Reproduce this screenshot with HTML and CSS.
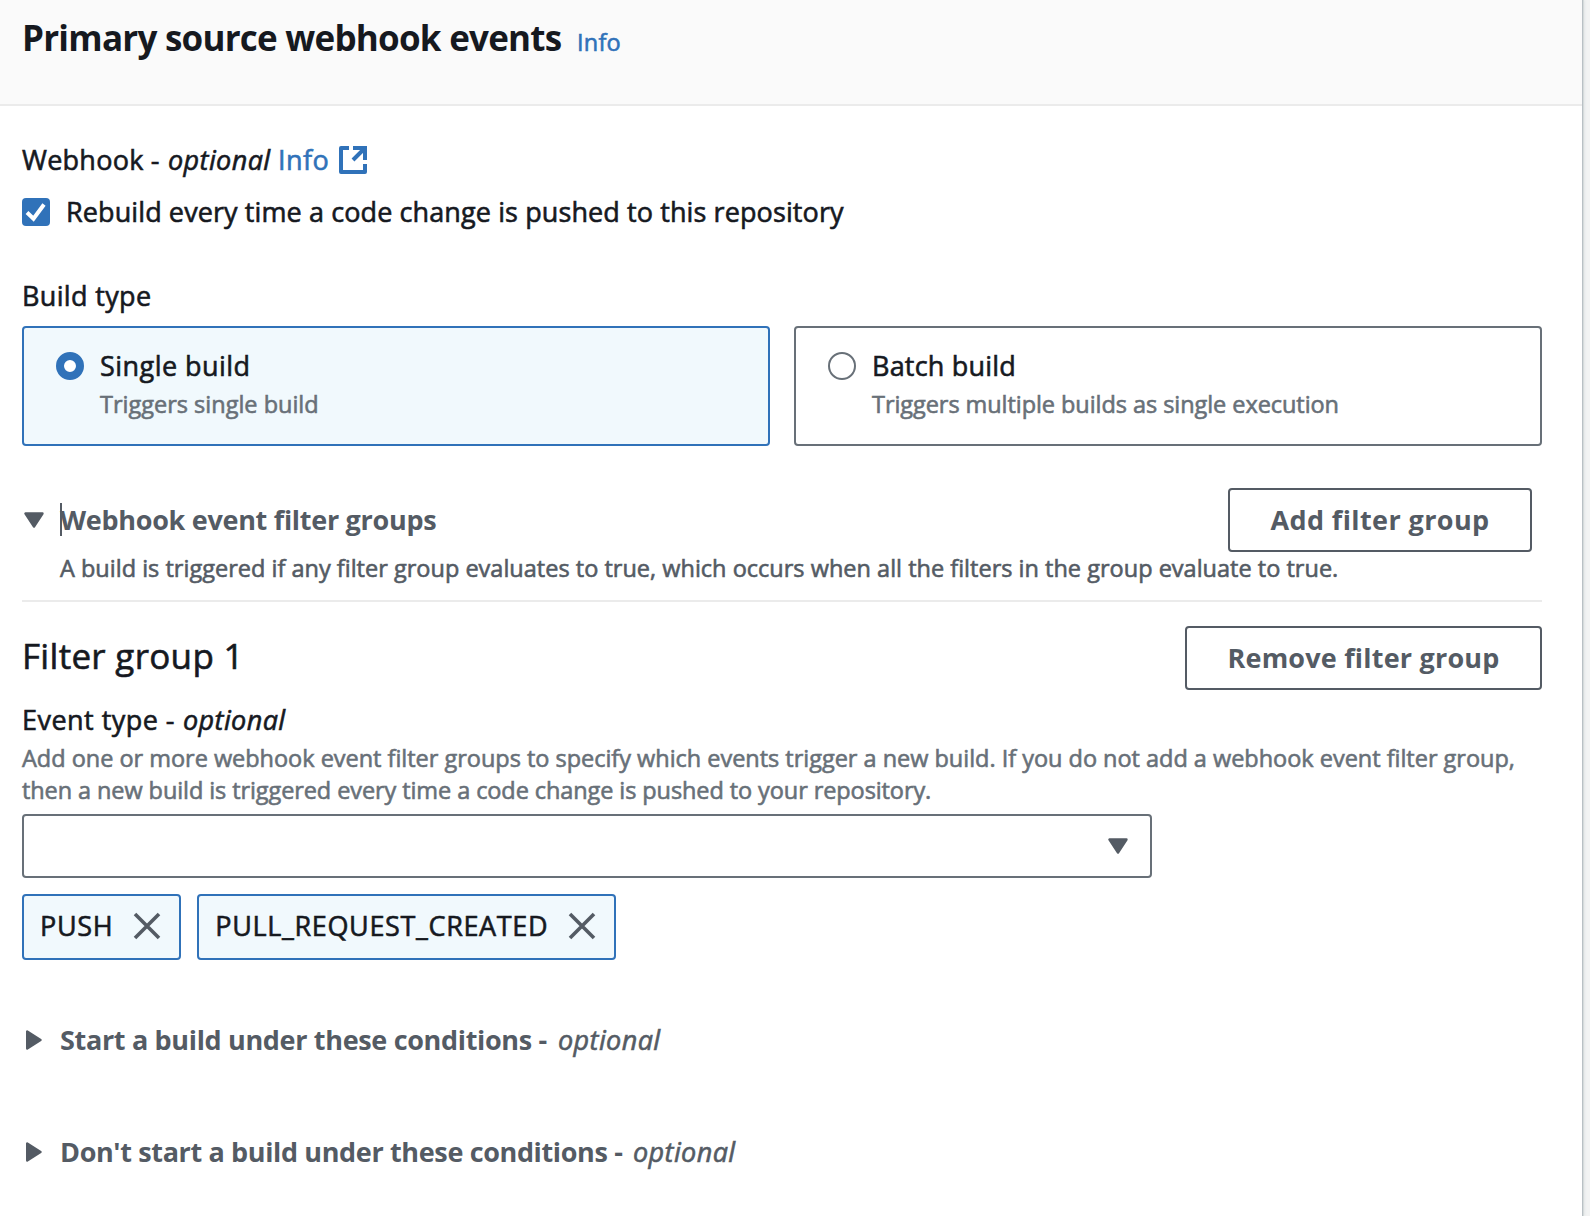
FILE: index.html
```html
<!DOCTYPE html>
<html lang="en">
<head>
<meta charset="utf-8">
<title>Primary source webhook events</title>
<link rel="stylesheet" href="styles.css">
</head>
<body>
<main class="panel">
  <header class="panel-header">
    <h1 class="title">Primary source webhook events</h1>
    <a class="link info-small">Info</a>
  </header>
  <div class="content">
    <div class="label webhook-label"><span class="lead">Webhook -&nbsp;</span><em>optional</em><a class="link info">Info</a>
      <svg class="external" width="28" height="28" viewBox="0 0 28 28" fill="none" stroke="currentColor" stroke-width="4"><path d="M10 2H2v24h24v-8" stroke-linejoin="round"/><path d="M14 2h12v12M25.500 2.500 14 14"/></svg>
    </div>
    <label class="check-row">
      <svg class="checkbox" width="28" height="28" viewBox="0 0 28 28"><rect width="28" height="28" rx="4" fill="#3072b9"/><path d="M5 14.500l6.500 6.200L22 6.500" fill="none" stroke="#fff" stroke-width="4"/></svg>
      <span class="rebuild">Rebuild every time a code change is pushed to this repository</span>
    </label>

    <div class="label build-label">Build type</div>
    <div class="cards">
      <div class="card selected">
        <span class="radio"></span>
        <div><div class="single">Single build</div><div class="small muted">Triggers single build</div></div>
      </div>
      <div class="card">
        <span class="radio"></span>
        <div><div class="batch">Batch build</div><div class="small muted multi">Triggers multiple builds as single execution</div></div>
      </div>
    </div>

    <section class="groups">
      <div class="groups-row">
        <svg class="arrow-down" width="20" height="16" viewBox="0 0 20 16"><path d="M1.500 1.500h17L10 14.500z" fill="currentColor" stroke="currentColor" stroke-width="2.400" stroke-linejoin="round"/></svg>
        <h2 class="expander caret">Webhook event filter groups</h2>
        <button class="button add">Add filter group</button>
      </div>
      <p class="small groups-desc">A build is triggered if any filter group evaluates to true, which occurs when all the filters in the group evaluate to true.</p>
    </section>

    <div class="group-head">
      <h3 class="group-title">Filter group 1</h3>
      <button class="button remove">Remove filter group</button>
    </div>
    <div class="label event-label"><span class="lead">Event type -&nbsp;</span><em>optional</em></div>
    <p class="small muted event-desc">Add one or more webhook event filter groups to specify which events trigger a new build. If you do not add a webhook event filter group,<br><span class="second">then a new build is triggered every time a code change is pushed to your repository.</span></p>
    <div class="select">
      <svg width="20" height="16" viewBox="0 0 20 16"><path d="M1.500 1.500h17L10 14.500z" fill="currentColor" stroke="currentColor" stroke-width="2.400" stroke-linejoin="round"/></svg>
    </div>
    <div class="tags">
      <span class="tag">PUSH<svg width="28" height="28" viewBox="0 0 28 28"><path d="M2 2l24 24M26 2 2 26" fill="none" stroke="currentColor" stroke-width="3.600"/></svg></span>
      <span class="tag">PULL_REQUEST_CREATED<svg width="28" height="28" viewBox="0 0 28 28"><path d="M2 2l24 24M26 2 2 26" fill="none" stroke="currentColor" stroke-width="3.600"/></svg></span>
    </div>

    <div class="condition start">
      <svg width="16" height="20" viewBox="0 0 16 20"><path d="M1.200 1.500v17L14.500 10z" fill="currentColor" stroke="currentColor" stroke-width="2.400" stroke-linejoin="round"/></svg>
      <span class="expander">Start a build under these conditions -&nbsp;</span><em>optional</em>
    </div>
    <div class="condition dont">
      <svg width="16" height="20" viewBox="0 0 16 20"><path d="M1.200 1.500v17L14.500 10z" fill="currentColor" stroke="currentColor" stroke-width="2.400" stroke-linejoin="round"/></svg>
      <span class="expander">Don't start a build under these conditions -&nbsp;</span><em>optional</em>
    </div>
  </div>
</main>
</body>
</html>
```
FILE: styles.css
```css
* { box-sizing: border-box; }
body {
  margin: 0;
  height: 1216px;
  overflow: hidden;
  background: #f2f3f3;
  color: #16191f;
  font: 400 27px/44px "Open Sans", "Noto Sans", sans-serif;
  -webkit-text-stroke: 0.6px currentColor;
}
h1, h2, h3, p { margin: 0; }
svg { display: block; flex: none; }
em { letter-spacing: 0.4px; }

.panel {
  width: 1582px;
  height: 1216px;
  background: #fff;
  box-shadow: 1px 0 0 #b9c0c5, 2px 0 0 #d5dbdb, 3px 0 2px #e3e7e8;
}
.panel-header {
  display: flex;
  align-items: baseline;
  height: 106px;
  padding: 16px 22px 0;
  background: #fafafa;
  border-bottom: 2px solid #ebebeb;
}
.title { width: 555px; font-size: 35px; font-weight: 700; line-height: 44px; letter-spacing: -0.76px; white-space: nowrap; -webkit-text-stroke: 0; }
.link { color: #3072b9; }
.info-small { font-size: 23.5px; letter-spacing: 0.24px; }
.content { padding: 32px 40px 0 22px; }
.label, .check-row { display: flex; height: 44px; white-space: nowrap; }
.webhook-label .lead { width: 146px; letter-spacing: 0.25px; }
.webhook-label em { width: 110px; }
.info { width: 61px; letter-spacing: 0.45px; }
.external { color: #3072b9; margin-top: 8px; }
.check-row { margin-top: 6px; }
.checkbox { margin: 10px 16px 0 0; }
.rebuild { margin-top: 2px; letter-spacing: 0.1px; }
.build-label { margin-top: 42px; letter-spacing: 0.35px; }

.cards { display: grid; grid-template-columns: 1fr 1fr; gap: 24px; margin-top: 8px; }
.card {
  display: flex;
  gap: 16px;
  height: 120px;
  padding: 16px 32px;
  border: 2px solid #687078;
  border-radius: 4px;
}
.card.selected { background: #f1f9fd; border-color: #3072b9; }
.radio { flex: none; width: 28px; height: 28px; margin-top: 8px; border: 2px solid #687078; border-radius: 50%; background: #fff; }
.selected .radio { border: 8px solid #3072b9; }
.single { letter-spacing: 0.45px; }
.batch { letter-spacing: 0.2px; }
.small { font-size: 23.5px; line-height: 32px; }
.muted { color: #687078; }
.multi { letter-spacing: -0.06px; }

.groups { margin-top: 42px; padding-bottom: 16px; border-bottom: 2px solid #ebebeb; color: #545b64; }
.groups-row { display: flex; height: 64px; padding: 0 10px 0 2px; }
.arrow-down { margin: 24px 16px 0 0; }
.expander { font-size: 27px; font-weight: 700; line-height: 44px; letter-spacing: -0.29px; white-space: nowrap; -webkit-text-stroke: 0; }
.caret { position: relative; margin-top: 10px; }
.caret::before { content: ""; position: absolute; left: 0; top: 5px; width: 2px; height: 33px; background: #545b64; }
.groups-desc { padding-left: 38px; white-space: nowrap; letter-spacing: 0.01px; }
.button {
  height: 64px;
  margin-left: auto;
  padding: 0;
  border: 2px solid #545b64;
  border-radius: 4px;
  background: #fff;
  color: #545b64;
  font: 700 27px/60px "Open Sans", "Noto Sans", sans-serif;
  white-space: nowrap;
  -webkit-text-stroke: 0;
}
.add { width: 304px; letter-spacing: 0.4px; }
.remove { width: 357px; letter-spacing: 0.2px; }

.group-head { display: flex; height: 64px; margin-top: 24px; }
.group-title { margin-top: 8px; font-size: 35px; font-weight: 400; line-height: 44px; letter-spacing: 0.3px; }
.event-label { margin-top: 8px; }
.event-label .lead { width: 161px; letter-spacing: 0.47px; }
.event-desc { white-space: nowrap; letter-spacing: -0.02px; }
.second { letter-spacing: -0.09px; }
.select {
  display: flex;
  align-items: center;
  justify-content: flex-end;
  width: 1130px;
  height: 64px;
  margin-top: 8px;
  padding-right: 22px;
  border: 2px solid #687078;
  border-radius: 4px;
  color: #545b64;
}
.tags { display: flex; gap: 16px; margin-top: 16px; }
.tag {
  display: flex;
  align-items: center;
  gap: 20px;
  height: 66px;
  padding: 0 18px 2px 16px;
  border: 2px solid #3072b9;
  border-radius: 4px;
  background: #f1f9fd;
  letter-spacing: 0.65px;
}
.tag svg { color: #545b64; }
.condition { display: flex; align-items: center; height: 44px; padding-left: 4px; color: #545b64; white-space: nowrap; }
.condition svg { margin-right: 18px; }
.start { margin-top: 58px; }
.start .expander { width: 498px; letter-spacing: -0.33px; }
.dont { margin-top: 68px; }
.dont .expander { width: 573px; letter-spacing: -0.36px; }
```
